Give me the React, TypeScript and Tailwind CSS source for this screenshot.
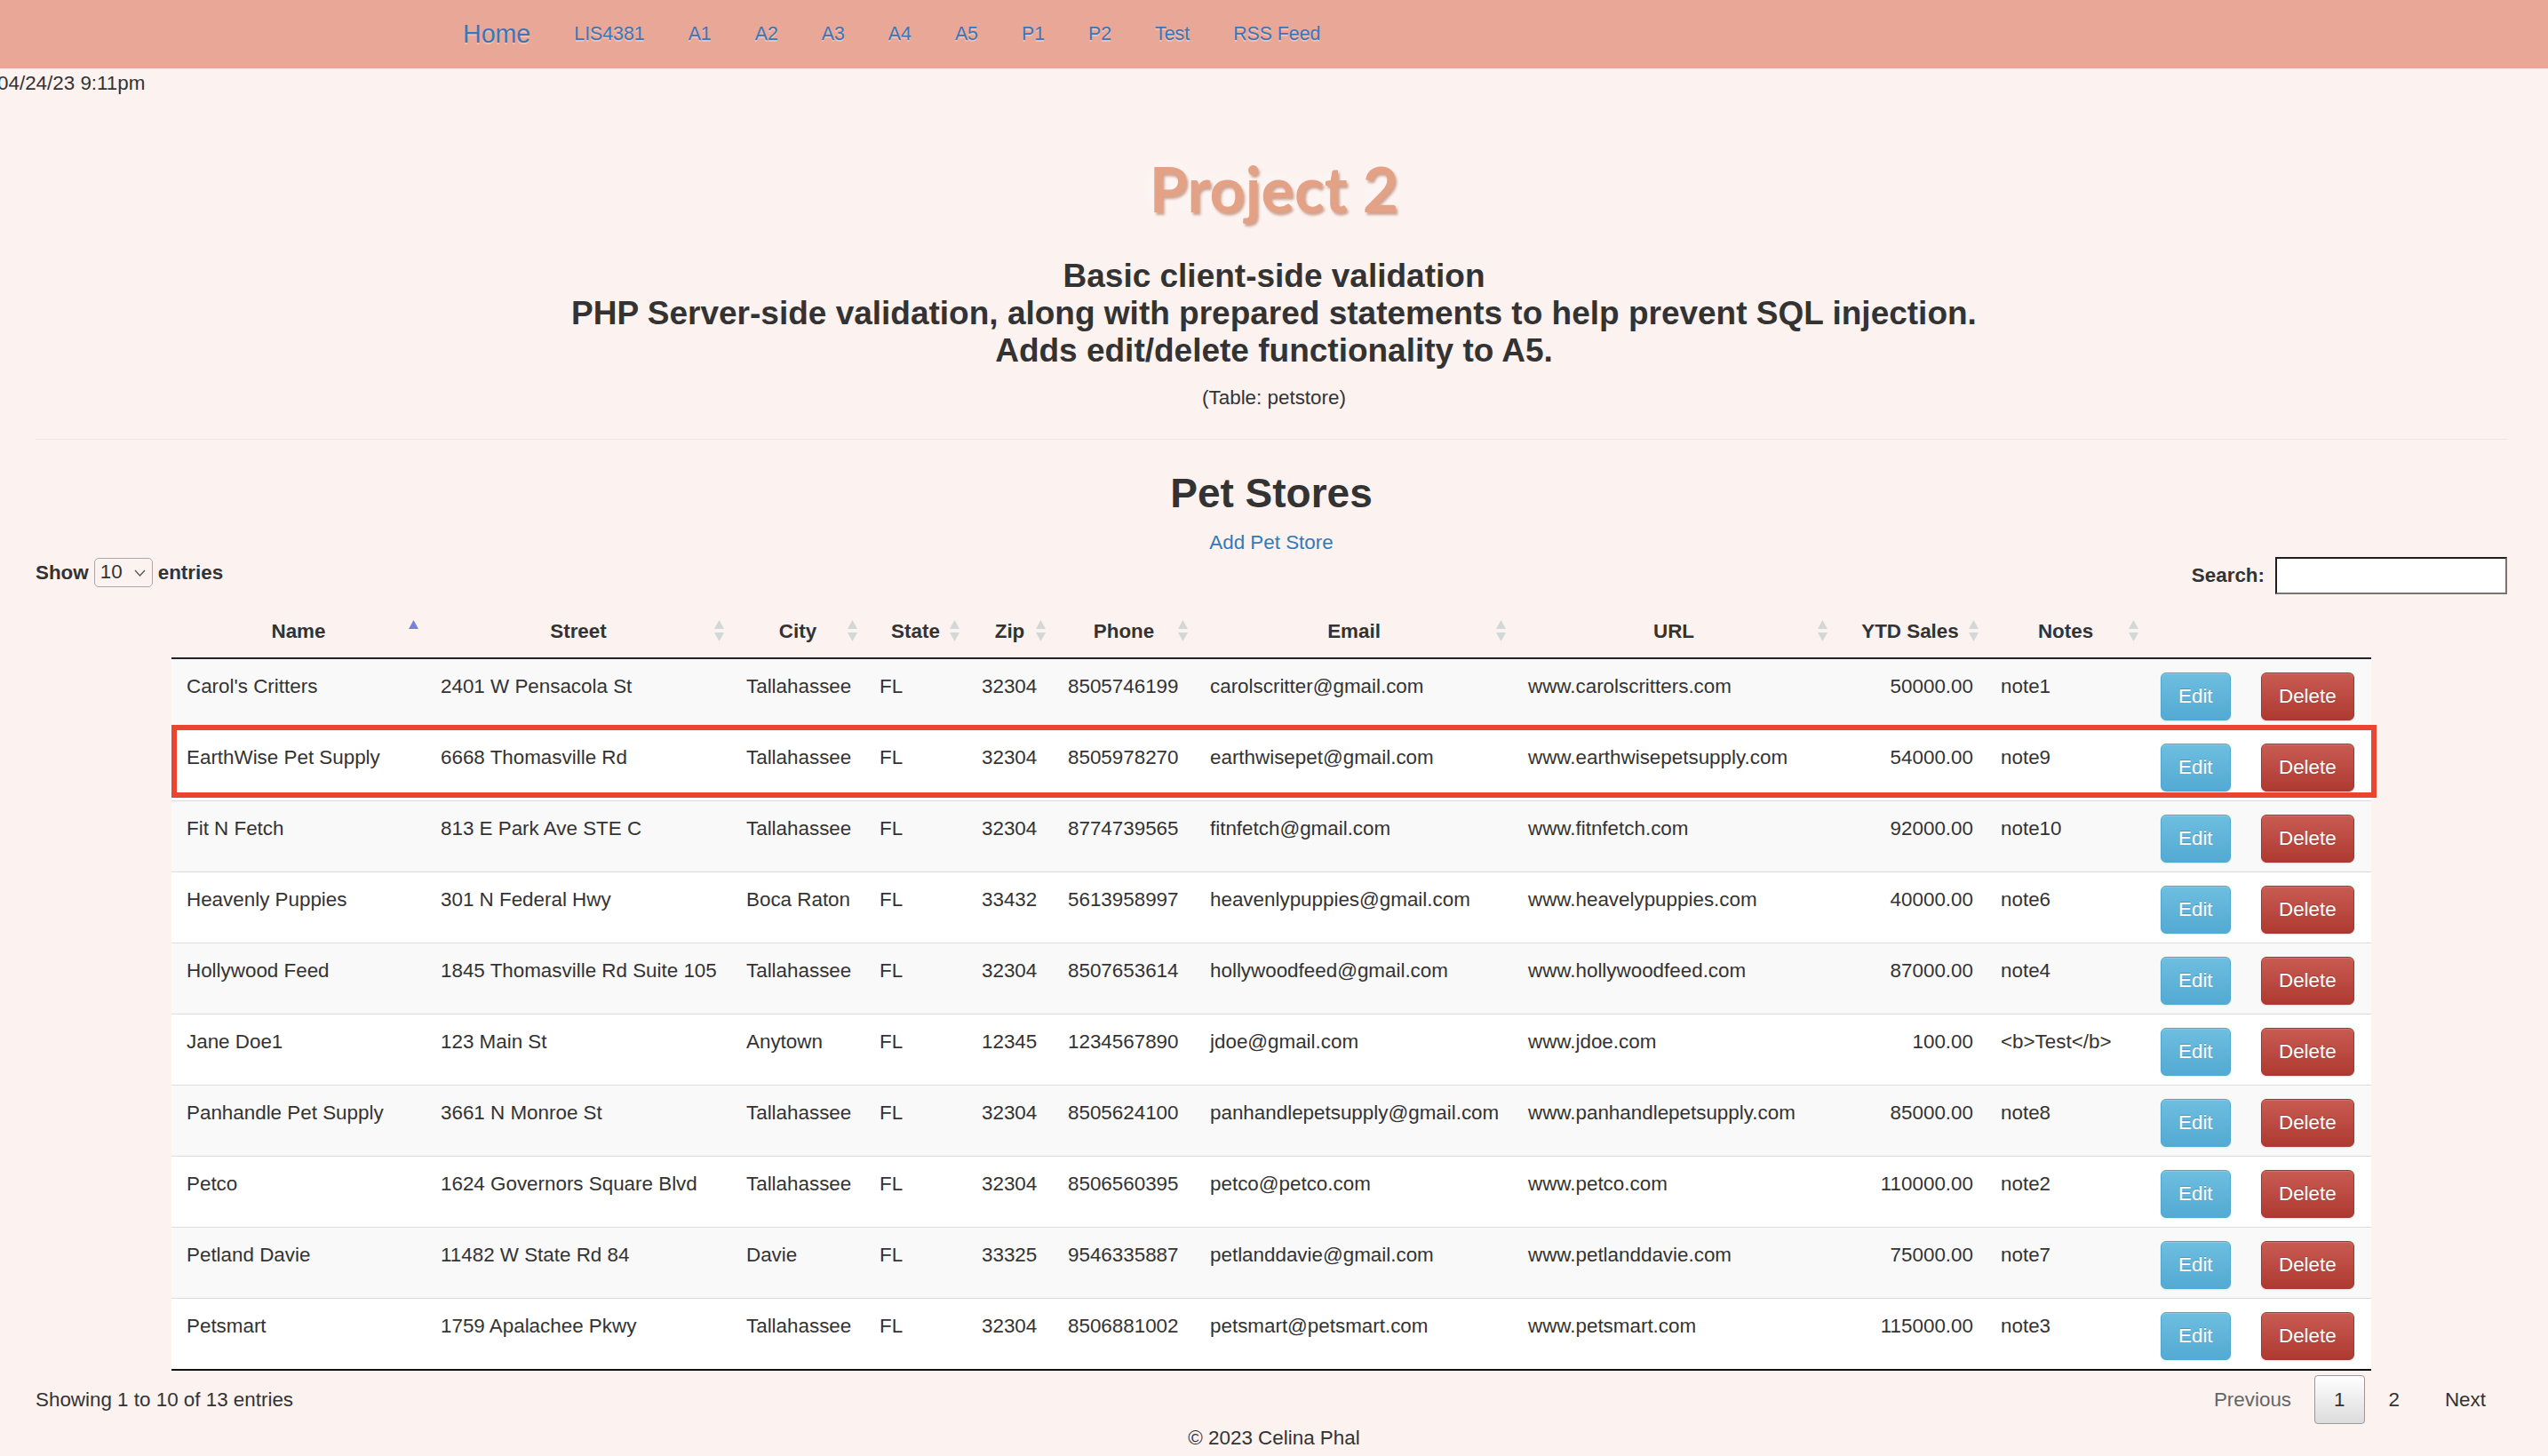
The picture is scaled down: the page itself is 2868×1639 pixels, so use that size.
import React from "react";

type Row = {
  name: string;
  street: string;
  city: string;
  state: string;
  zip: string;
  phone: string;
  email: string;
  url: string;
  ytd: string;
  notes: string;
};

const rows: Row[] = [
  { name: "Carol's Critters", street: "2401 W Pensacola St", city: "Tallahassee", state: "FL", zip: "32304", phone: "8505746199", email: "carolscritter@gmail.com", url: "www.carolscritters.com", ytd: "50000.00", notes: "note1" },
  { name: "EarthWise Pet Supply", street: "6668 Thomasville Rd", city: "Tallahassee", state: "FL", zip: "32304", phone: "8505978270", email: "earthwisepet@gmail.com", url: "www.earthwisepetsupply.com", ytd: "54000.00", notes: "note9" },
  { name: "Fit N Fetch", street: "813 E Park Ave STE C", city: "Tallahassee", state: "FL", zip: "32304", phone: "8774739565", email: "fitnfetch@gmail.com", url: "www.fitnfetch.com", ytd: "92000.00", notes: "note10" },
  { name: "Heavenly Puppies", street: "301 N Federal Hwy", city: "Boca Raton", state: "FL", zip: "33432", phone: "5613958997", email: "heavenlypuppies@gmail.com", url: "www.heavelypuppies.com", ytd: "40000.00", notes: "note6" },
  { name: "Hollywood Feed", street: "1845 Thomasville Rd Suite 105", city: "Tallahassee", state: "FL", zip: "32304", phone: "8507653614", email: "hollywoodfeed@gmail.com", url: "www.hollywoodfeed.com", ytd: "87000.00", notes: "note4" },
  { name: "Jane Doe1", street: "123 Main St", city: "Anytown", state: "FL", zip: "12345", phone: "1234567890", email: "jdoe@gmail.com", url: "www.jdoe.com", ytd: "100.00", notes: "<b>Test</b>" },
  { name: "Panhandle Pet Supply", street: "3661 N Monroe St", city: "Tallahassee", state: "FL", zip: "32304", phone: "8505624100", email: "panhandlepetsupply@gmail.com", url: "www.panhandlepetsupply.com", ytd: "85000.00", notes: "note8" },
  { name: "Petco", street: "1624 Governors Square Blvd", city: "Tallahassee", state: "FL", zip: "32304", phone: "8506560395", email: "petco@petco.com", url: "www.petco.com", ytd: "110000.00", notes: "note2" },
  { name: "Petland Davie", street: "11482 W State Rd 84", city: "Davie", state: "FL", zip: "33325", phone: "9546335887", email: "petlanddavie@gmail.com", url: "www.petlanddavie.com", ytd: "75000.00", notes: "note7" },
  { name: "Petsmart", street: "1759 Apalachee Pkwy", city: "Tallahassee", state: "FL", zip: "32304", phone: "8506881002", email: "petsmart@petsmart.com", url: "www.petsmart.com", ytd: "115000.00", notes: "note3" },
];

const navLinks = ["LIS4381", "A1", "A2", "A3", "A4", "A5", "P1", "P2", "Test", "RSS Feed"];

function SortIcon({ asc }: { asc?: boolean }) {
  return (
    <svg width="11" height="24" viewBox="0 0 11 24" className="absolute right-[8px] top-[16px]">
      {asc ? (
        <polygon points="5.5,0 11,10 0,10" fill="#7980da" />
      ) : (
        <>
          <polygon points="5.5,0 11,10 0,10" fill="#d2d8d8" />
          <polygon points="0,14 11,14 5.5,24" fill="#d2d8d8" />
        </>
      )}
    </svg>
  );
}

const headers: { label: string; col: string; sort: "asc" | "both" | "none" }[] = [
  { label: "Name", col: "w-[286px]", sort: "asc" },
  { label: "Street", col: "w-[344px]", sort: "both" },
  { label: "City", col: "w-[150px]", sort: "both" },
  { label: "State", col: "w-[115px]", sort: "both" },
  { label: "Zip", col: "w-[97px]", sort: "both" },
  { label: "Phone", col: "w-[160px]", sort: "both" },
  { label: "Email", col: "w-[358px]", sort: "both" },
  { label: "URL", col: "w-[362px]", sort: "both" },
  { label: "YTD Sales", col: "w-[170px]", sort: "both" },
  { label: "Notes", col: "w-[180px]", sort: "both" },
  { label: "", col: "w-[114px]", sort: "none" },
  { label: "", col: "w-[140px]", sort: "none" },
];

export default function App() {
  return (
    <div className="min-h-screen bg-[#fcf2ef] font-['Liberation_Sans',Arial,sans-serif] text-[22.4px] leading-[32px] text-[#333]">
      {/* Navbar */}
      <nav className="h-[77px] bg-[#e9a897] flex items-center pl-[521px] gap-[49px] text-[#3b76b8] [text-shadow:0_2px_0_rgba(255,255,255,0.3)]">
        <span className="text-[28.6px] leading-none">Home</span>
        {navLinks.map((l) => (
          <span key={l} className="text-[21.3px] leading-none">
            {l}
          </span>
        ))}
      </nav>

      {/* Date */}
      <div className="ml-[-3px] mt-[1px] leading-[32px]">04/24/23 9:11pm</div>

      {/* Title */}
      <div className="mt-[62px] text-center font-['Lato',sans-serif] font-bold text-[70px] leading-[80px] text-[#e3a185] [text-shadow:2px_3px_3px_rgba(170,95,65,0.55),0_0_30px_rgba(255,255,255,0.9)]">
        Project 2
      </div>

      <div className="mt-[38px] text-center font-bold text-[37px] leading-[42px] text-[#333]">
        <div>Basic client-side validation</div>
        <div>PHP Server-side validation, along with prepared statements to help prevent SQL injection.</div>
        <div>Adds edit/delete functionality to A5.</div>
      </div>

      <div className="mt-[16px] text-center">(Table: petstore)</div>

      <div className="pl-[40px] pr-[46px]">
        <div className="mt-[30px] border-t border-[#f3e5e1]" />

        <div className="mt-[34px] text-center font-bold text-[46px] leading-[52px]">Pet Stores</div>
        <div className="mt-[14px] text-center text-[#337ab7]">Add Pet Store</div>

        {/* Controls */}
        <div className="flex h-[42px] items-start justify-between">
          <div className="mt-[1px] flex h-[33px] items-center gap-[6px] font-bold">
            <span>Show</span>
            <div className="flex h-[33px] w-[66px] items-center justify-between rounded-[5px] border border-[#a9a9a9] bg-[#fcf2ef] pl-[6px] pr-[7px] font-normal">
              <span className="leading-none">10</span>
              <svg width="13" height="8" viewBox="0 0 13 8">
                <polyline points="1,1 6.5,7 12,1" fill="none" stroke="#555" strokeWidth="1.3" />
              </svg>
            </div>
            <span>entries</span>
          </div>
          <div className="flex h-[42px] items-center gap-[12px]">
            <span className="font-bold">Search:</span>
            <div className="h-[42px] w-[261px] border-2 border-t-[#1f1f1f] border-l-[#1f1f1f] border-b-[#767676] border-r-[#767676] bg-white" />
          </div>
        </div>

        {/* Table */}
        <div className="relative mx-auto mt-[13px] w-[2476px]">
          <table className="w-[2476px] table-fixed border-separate border-spacing-0">
            <colgroup>
              {headers.map((h, i) => (
                <col key={i} className={h.col} />
              ))}
            </colgroup>
            <thead>
              <tr>
                {headers.map((h, i) => (
                  <th
                    key={i}
                    className="relative border-b-2 border-[#222] pt-[13px] pb-[13px] text-center font-bold leading-[32px] whitespace-nowrap"
                  >
                    {h.label}
                    {h.sort === "asc" && <SortIcon asc />}
                    {h.sort === "both" && <SortIcon />}
                  </th>
                ))}
              </tr>
            </thead>
            <tbody>
              {rows.map((r, i) => {
                const bg = i % 2 === 0 ? "bg-[#f9f9f9]" : "bg-white";
                const top = i === 0 ? "" : "border-t border-[#ddd]";
                const bottom = i === rows.length - 1 ? "border-b-2 border-b-[#111]" : "";
                const td = `${bg} ${top} ${bottom} align-top pt-[15px] pb-[10px] pl-[17px] pr-[14px] leading-[32px] whitespace-nowrap overflow-hidden`;
                const cells = [r.name, r.street, r.city, r.state, r.zip, r.phone, r.email, r.url];
                return (
                  <tr key={i}>
                    {cells.map((c, j) => (
                      <td key={j} className={td}>
                        {c}
                      </td>
                    ))}
                    <td className={`${td} text-right`}>{r.ytd}</td>
                    <td className={td}>{r.notes}</td>
                    <td className={td}>
                      <span className="inline-flex h-[54px] items-center rounded-[6px] border border-[#4fa6cf] bg-gradient-to-b from-[#6dbee0] to-[#54aad3] px-[19px] leading-none text-white shadow-[inset_0_1px_0_rgba(255,255,255,0.2),0_1px_2px_rgba(0,0,0,0.1)] [text-shadow:0_-1px_0_rgba(0,0,0,0.2)]">
                        Edit
                      </span>
                    </td>
                    <td className={`${td} !pl-[16px]`}>
                      <span className="inline-flex h-[54px] items-center rounded-[6px] border border-[#a5352e] bg-gradient-to-b from-[#c95b53] to-[#af3930] px-[19px] leading-none text-white shadow-[inset_0_1px_0_rgba(255,255,255,0.15),0_1px_2px_rgba(0,0,0,0.1)] [text-shadow:0_-1px_0_rgba(0,0,0,0.2)]">
                        Delete
                      </span>
                    </td>
                  </tr>
                );
              })}
            </tbody>
          </table>
          <div className="pointer-events-none absolute left-0 top-[134px] h-[82px] w-[2482px] border-[6px] border-[#e9452f]" />
        </div>

        {/* Footer controls */}
        <div className="mt-[5px] flex h-[55px] items-center justify-between">
          <span>Showing 1 to 10 of 13 entries</span>
          <div className="flex h-[55px] items-center">
            <span className="px-[24px] text-[#666]">Previous</span>
            <span className="ml-[2px] flex h-[55px] items-center rounded-[4px] border border-[#999] bg-gradient-to-b from-white to-[#dcdcdc] px-[21px] text-[#333]">
              1
            </span>
            <span className="ml-[3px] px-[24px]">2</span>
            <span className="ml-[3px] px-[24px]">Next</span>
          </div>
        </div>
      </div>

      <div className="text-center leading-[32px]">© 2023 Celina Phal</div>
    </div>
  );
}
